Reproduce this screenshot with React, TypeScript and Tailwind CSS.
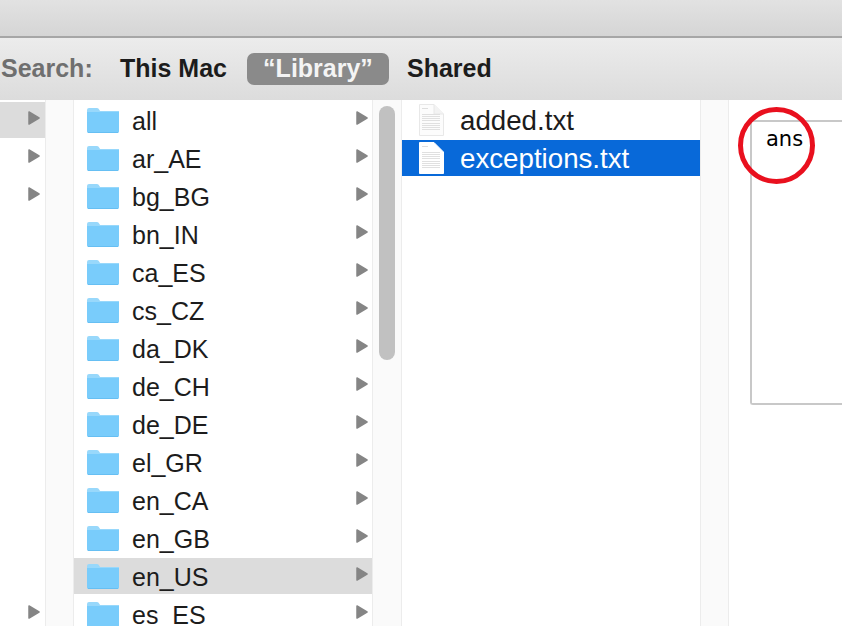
const folders = [
  "all", "ar_AE", "bg_BG", "bn_IN", "ca_ES", "cs_CZ", "da_DK", "de_CH",
  "de_DE", "el_GR", "en_CA", "en_GB", "en_US", "es_ES",
];

function Arrow() {
  return (
    <svg width="12" height="14" viewBox="0 0 12 14" className="-translate-y-[2px] shrink-0">
      <path d="M1 1 L11 7 L1 13 Z" fill="#858585" stroke="#858585" strokeWidth="1.5" strokeLinejoin="round" />
    </svg>
  );
}

function Folder() {
  return (
    <svg width="32" height="25" viewBox="0 0 32 25" className="shrink-0">
      <path d="M0 2 Q0 0 2 0 H10 Q11.5 0 12.5 2 L13 3 H32 V23 Q32 25 30 25 H2 Q0 25 0 23 Z" fill="#98d8fb" />
      <path d="M0 4 H32 V23 Q32 25 30 25 H2 Q0 25 0 23 Z" fill="#79ccfb" />
      <rect x="1" y="24" width="30" height="1" fill="#66bff3" />
    </svg>
  );
}

function Doc({ selected = false }: { selected?: boolean }) {
  const lines = [10, 12, 14, 16, 19, 21, 23, 25];
  return (
    <svg width="25" height="32" viewBox="0 0 25 32" className="shrink-0">
      <path
        d="M0.5 0.5 H15 L24.5 10 V31.5 H0.5 Z"
        fill={selected ? "#ffffff" : "#fcfcfc"}
        stroke={selected ? "#ffffff" : "#e8e8e8"}
      />
      {!selected && <path d="M15 0.5 V10 H24.5" fill="#f3f3f3" stroke="#e8e8e8" />}
      <rect x="3" y="4" width="6" height="1" fill="#dedede" />
      {lines.map((y) => (
        <rect key={y} x="3" y={y} width={y < 10 ? 10 : 18} height="1" fill="#e0e0e0" />
      ))}
    </svg>
  );
}

export default function App() {
  return (
    <div className="w-[842px] h-[626px] overflow-hidden bg-white flex flex-col font-['Liberation_Sans',Arial,sans-serif] text-[#1c1c1c]">
      {/* title bar */}
      <div className="h-[38px] shrink-0 bg-gradient-to-b from-[#e2e2e2] to-[#d5d5d5] border-b-2 border-[#a6a6a6]" />

      {/* search scope bar */}
      <div className="h-[62px] shrink-0 flex items-center bg-gradient-to-b from-[#ececec] to-[#dcdcdc] text-[25px] font-bold pb-[1px]">
        <span className="ml-[1px] w-[119px] text-[#6f6f6f]">Search:</span>
        <span className="w-[127px]">This Mac</span>
        <span className="w-[142px] h-[32px] rounded-[7px] bg-[#8a8a8a] text-[#f4f4f4] flex items-center justify-center">
          “Library”
        </span>
        <span className="ml-[18px]">Shared</span>
      </div>

      {/* columns */}
      <div className="flex-1 flex min-h-0 text-[25px]">
        {/* parent column */}
        <div className="w-[45px] shrink-0 pt-[2px] flex flex-col gap-[2px]">
          {[0, 1, 2, 3, 4, 5, 6, 7, 8, 9, 10, 11, 12, 13].map((i) => (
            <div key={i} className={`h-[36px] shrink-0 flex items-center justify-end pr-[5px] ${i === 0 ? "bg-[#dcdcdc]" : ""}`}>
              {(i < 3 || i === 13) && <Arrow />}
            </div>
          ))}
        </div>
        <div className="w-[29px] shrink-0 bg-[#fafafa] border-x border-[#ececec]" />

        {/* locale folders */}
        <div className="w-[298px] shrink-0 pt-[2px] flex flex-col gap-[2px]">
          {folders.map((name) => (
            <div key={name} className={`h-[36px] shrink-0 flex items-center pl-[13px] pr-[4px] ${name === "en_US" ? "bg-[#dcdcdc]" : ""}`}>
              <Folder />
              <span className="ml-[13px] flex-1 leading-none pt-[2px]">{name}</span>
              <Arrow />
            </div>
          ))}
        </div>

        {/* scroll gutter */}
        <div className="w-[30px] shrink-0 bg-[#fafafa] border-x border-[#ececec] pt-[6px] flex justify-center">
          <div className="w-[16px] h-[254px] rounded-full bg-[#c1c1c1]" />
        </div>

        {/* files */}
        <div className="w-[298px] shrink-0 pt-[2px] flex flex-col gap-[2px] text-[27.7px]">
          <div className="h-[36px] flex items-center pl-[17px]">
            <Doc />
            <span className="ml-[16px] leading-none pt-[2px]">added.txt</span>
          </div>
          <div className="h-[36px] flex items-center pl-[17px] bg-[#0869d9] text-white">
            <Doc selected />
            <span className="ml-[16px] leading-none pt-[2px]">exceptions.txt</span>
          </div>
        </div>
        <div className="w-[29px] shrink-0 bg-[#fafafa] border-x border-[#ececec]" />

        {/* preview */}
        <div className="flex-1 min-w-0 pt-[20px] pl-[21px]">
          <div className="relative h-[285px] w-[200px] border-2 border-r-0 border-[#c8c8c8] rounded-bl-[3px] font-['DejaVu_Sans',sans-serif] text-[21px] text-black">
            <span className="absolute left-[14px] top-[3px] leading-[28px]">ans</span>
            <div className="absolute left-[-14px] top-[-15px] w-[77px] h-[77px] rounded-full border-[5px] border-[#e9101e]" />
          </div>
        </div>
      </div>
    </div>
  );
}
